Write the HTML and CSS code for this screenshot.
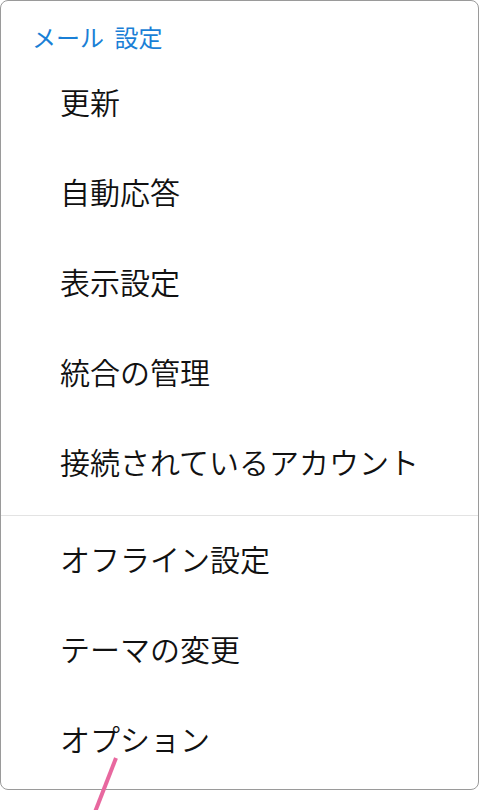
FILE: index.html
```html
<!DOCTYPE html>
<html lang="ja">
<head>
  <meta charset="UTF-8">
  <title>メール 設定</title>
  <link rel="stylesheet" href="styles.css">
</head>
<body>
  <div class="menu">
    <div class="menu-title">メール 設定</div>

    <ul class="menu-list">
      <li>更新</li>
      <li>自動応答</li>
      <li>表示設定</li>
      <li>統合の管理</li>
      <li>接続されているアカウント</li>
    </ul>

    <div class="divider"></div>

    <ul class="menu-list">
      <li>オフライン設定</li>
      <li>テーマの変更</li>
      <li>オプション</li>
    </ul>
  </div>

  <svg class="pointer" width="40" height="60" viewBox="0 0 40 60">
    <line x1="31" y1="8" x2="10" y2="62" stroke="#e8689f" stroke-width="4" />
  </svg>
</body>
</html>
```

FILE: styles.css
```css
body {
  margin: 0;
  background-color: #ffffff;
  font-family: "Noto Sans CJK JP", "Noto Sans", sans-serif;
  position: relative;
  height: 810px;
  overflow: hidden;
}

.menu {
  width: 477px;
  height: 771px;
  border: 1px solid #9a9a9a;
  border-radius: 8px;
  background-color: #ffffff;
  padding-top: 17px;
}

.menu-title {
  color: #1a7fd6;
  font-size: 24px;
  font-weight: 400;
  line-height: 38px;
  padding-left: 31px;
  word-spacing: 5px;
}

.menu-list {
  list-style: none;
  margin: 0;
  padding: 0;
}

.menu-list li {
  font-size: 30px;
  font-weight: 350;
  line-height: 90px;
  height: 90px;
  padding-left: 59px;
  color: #111111;
  white-space: nowrap;
}

.divider {
  height: 1px;
  background-color: #e3e3e3;
  margin: 9px 0 -3px 0;
}

.pointer {
  position: absolute;
  left: 85px;
  top: 750px;
}
```
